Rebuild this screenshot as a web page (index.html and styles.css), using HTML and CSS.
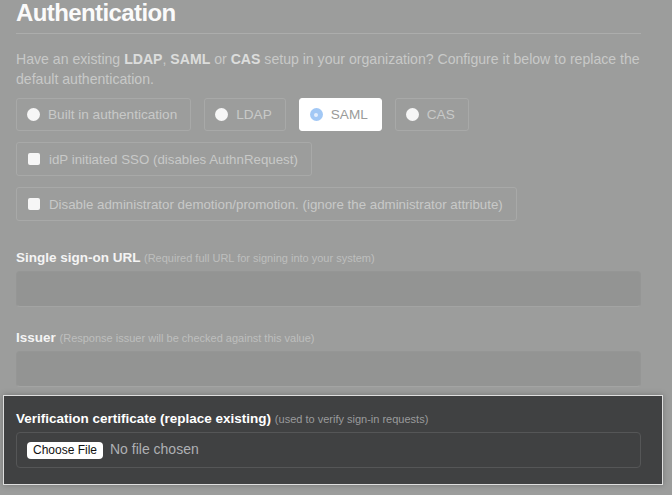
FILE: index.html
```html
<!DOCTYPE html>
<html>
<head>
<meta charset="utf-8">
<link rel="stylesheet" href="styles.css">
</head>
<body>
<div class="page">
  <div class="content">
    <h1 class="title">Authentication</h1>
    <p class="intro">Have an existing <strong>LDAP</strong>, <strong>SAML</strong> or <strong>CAS</strong> setup in your organization? Configure it below to replace the default authentication.</p>

    <div class="radio-row">
      <label class="choice"><span class="radio"></span>Built in authentication</label>
      <label class="choice"><span class="radio"></span>LDAP</label>
      <label class="choice selected"><span class="radio checked"></span>SAML</label>
      <label class="choice"><span class="radio"></span>CAS</label>
    </div>

    <div class="check-row">
      <label class="choice"><span class="checkbox"></span>idP initiated SSO (disables AuthnRequest)</label>
    </div>
    <div class="check-row">
      <label class="choice"><span class="checkbox"></span>Disable administrator demotion/promotion. (ignore the administrator attribute)</label>
    </div>

    <div class="field first-field">
      <div class="field-label">Single sign-on URL <span class="hint">(Required full URL for signing into your system)</span></div>
      <div class="text-input"></div>
    </div>

    <div class="field">
      <div class="field-label">Issuer <span class="hint">(Response issuer will be checked against this value)</span></div>
      <div class="text-input"></div>
    </div>
  </div>

  <section class="highlight">
    <div class="field-label">Verification certificate (replace existing) <span class="hint">(used to verify sign-in requests)</span></div>
    <div class="file-box">
      <input class="file-input" type="file">
    </div>
  </section>
</div>
</body>
</html>
```

FILE: styles.css
```css
* { box-sizing: border-box; }

html, body {
  margin: 0;
  padding: 0;
  background: #9c9d9c;
  height: 100%;
  overflow: hidden;
}

body {
  font-family: "Liberation Sans", Arial, sans-serif;
  color: #c8c9c8;
}

.page {
  width: 672px;
}

.content {
  margin-left: 16px;
  width: 625px;
}

.title {
  margin: 0;
  font-size: 24px;
  line-height: 26px;
  font-weight: bold;
  color: #fafafa;
  letter-spacing: -0.6px;
  padding-bottom: 7px;
  border-bottom: 1px solid #acadac;
}

.intro {
  margin: 15px 0 0;
  font-size: 14.1px;
  line-height: 20px;
  color: #c8c9c8;
}

.intro strong {
  color: #dcdddc;
}

.radio-row {
  display: flex;
  gap: 13px;
  margin-top: 9px;
}

.check-row {
  display: flex;
  margin-top: 11px;
}

.choice {
  display: flex;
  align-items: center;
  gap: 8px;
  height: 33px;
  padding: 0 13px 0 10px;
  border: 1px solid #a8a9a8;
  border-radius: 3px;
  font-size: 13.6px;
  color: #c8c9c8;
  white-space: nowrap;
}

.check-row .choice {
  height: 34px;
  gap: 9px;
  font-size: 13.3px;
}

.choice.selected {
  background: #ffffff;
  border-color: #ffffff;
  color: #9a9b9a;
}

.radio {
  width: 13px;
  height: 13px;
  border-radius: 50%;
  background: #f6f6f6;
  flex: none;
  display: flex;
  align-items: center;
  justify-content: center;
}

.radio.checked {
  background: #a2c8f5;
}

.radio.checked::after {
  content: "";
  width: 4px;
  height: 4px;
  border-radius: 50%;
  background: #e4eefc;
}

.checkbox {
  width: 12px;
  height: 12px;
  border-radius: 2px;
  background: #f6f6f6;
  flex: none;
  margin-left: 1px;
}

.field-label {
  font-size: 13.5px;
  line-height: 18px;
  font-weight: bold;
  color: #f4f4f4;
}

.hint {
  font-size: 11px;
  font-weight: normal;
  color: #bebfbe;
}

.field {
  margin-top: 22px;
}

.first-field {
  margin-top: 28px;
}

.text-input {
  margin-top: 4px;
  height: 36px;
  background: #939493;
  border: 1px solid #959695;
  border-bottom-color: #a3a4a3;
  border-radius: 4px;
}

.highlight {
  margin: 8px 0 0 3px;
  width: 660px;
  height: 90px;
  background: #404142;
  border: 1px solid #dedede;
  box-shadow: 0 0 6px rgba(0, 0, 0, 0.25);
  padding: 14px 21px 0 12px;
}

.highlight .field-label {
  color: #ffffff;
}

.highlight .hint {
  color: #9a9b9c;
}

.file-box {
  margin-top: 4px;
  height: 36px;
  border: 1px solid #555657;
  border-radius: 4px;
  display: flex;
  align-items: center;
  padding-left: 10px;
}

.file-input {
  font-family: "Liberation Sans", Arial, sans-serif;
  font-size: 14px;
  color: #aeb0b4;
  margin: 0;
}

.file-input::file-selector-button {
  font-family: "Liberation Sans", Arial, sans-serif;
  font-size: 12px;
  color: #111;
  background: #ffffff;
  border: none;
  border-radius: 4px;
  height: 17px;
  width: 76px;
  padding: 0;
  margin-right: 7px;
}
```
